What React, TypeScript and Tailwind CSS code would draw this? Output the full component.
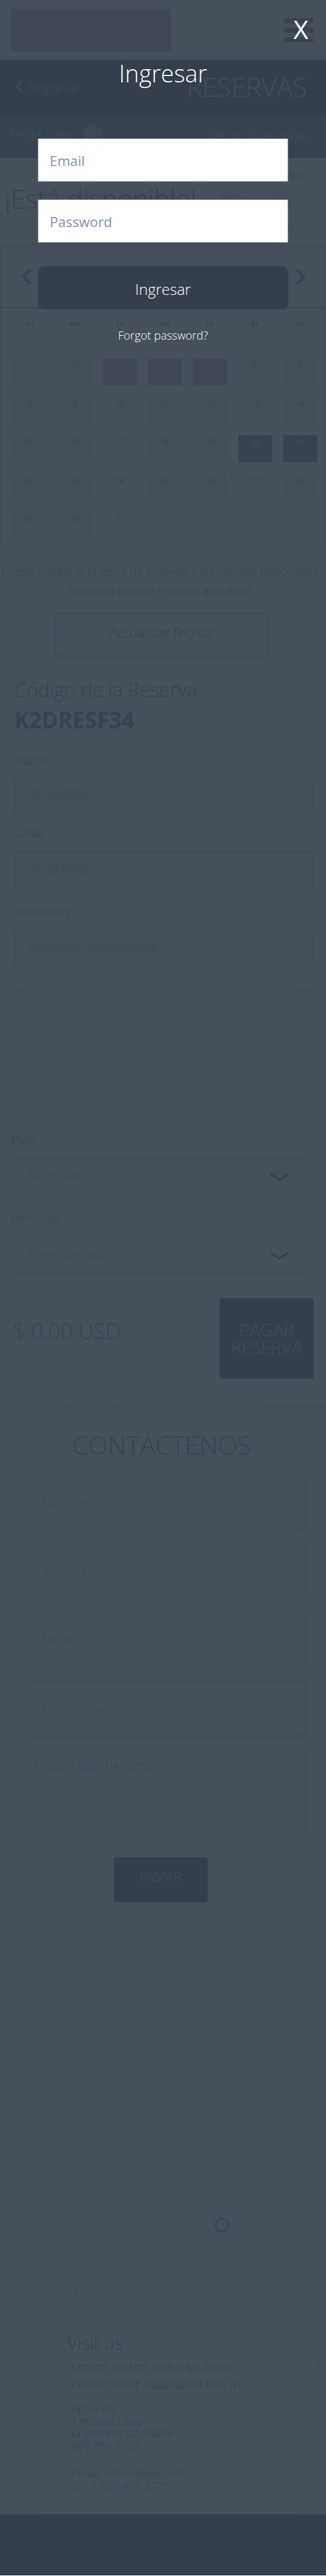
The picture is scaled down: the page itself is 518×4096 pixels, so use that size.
import type { ReactNode } from "react";

type DayState = "free" | "taken" | "selected";

const WEEKDAYS = ["Su", "Mo", "Tu", "We", "Th", "Fr", "Sa"];
const TAKEN = [3, 4, 5];
const SELECTED = [20, 21];

const DAY_STYLE: Record<DayState, string> = {
  free: "bg-[#444e58] text-[#37424e]",
  taken: "bg-[#3e4753] text-[#46505a]",
  selected: "bg-[#36424e] text-[#46505a]",
};

function dayState(day: number): DayState {
  if (TAKEN.includes(day)) return "taken";
  if (SELECTED.includes(day)) return "selected";
  return "free";
}

function Chevron({ points, className }: { points: string; className: string }) {
  return (
    <svg viewBox="0 0 30 30" fill="none" stroke="currentColor" strokeWidth="4" className={className} aria-hidden="true">
      <polyline points={points} />
    </svg>
  );
}

function Header() {
  return (
    <header className="flex h-[95px] items-center justify-between pl-[17px] pr-5">
      <div className="h-[68px] w-[53%] bg-[#3e4753]" />
      <button type="button" aria-label="Menú" className="flex w-[46px] flex-col gap-[7px]">
        <span className="h-2 bg-[#39434e]" />
        <span className="h-2 bg-[#39434e]" />
        <span className="h-2 bg-[#39434e]" />
      </button>
    </header>
  );
}

function TitleBars() {
  return (
    <>
      <div className="flex h-[89px] items-center justify-between bg-[#353f4b] pb-1 pl-[25px] pr-[30px] text-[#434d58]">
        <a href="#inicio" className="flex items-center gap-2 text-[21px] leading-7">
          <svg viewBox="0 0 11 20" fill="none" stroke="currentColor" strokeWidth="2.6" className="h-5 w-[11px]" aria-hidden="true">
            <polyline points="10,1 2,10 10,19" />
          </svg>
          Regresar
        </a>
        <h1 className="text-[42px] leading-[56px]">RESERVAS</h1>
      </div>
      <div className="flex h-[68px] items-center justify-between border border-[#3a4551] bg-[#36424e] pb-2 pl-4 pr-[28px] text-[#434d58]">
        <div className="flex items-center gap-3">
          <span className="text-2xl">Hola Juan</span>
          <span className="size-8 rounded-full bg-[#3e4753]" />
        </div>
        <a href="#reservas" className="text-[21px] leading-7">Ver mis reservas</a>
      </div>
    </>
  );
}

function Availability() {
  const legend = [
    { label: "No disponible", swatch: "bg-[#3e4753]" },
    { label: "Disponible", swatch: "bg-[#424c57]" },
    { label: "Reservada", swatch: "bg-[#36424e]" },
  ];
  return (
    <section className="flex items-center justify-between pb-2 pl-[7px] pr-[29px] pt-[5px]">
      <h2 className="pb-2 text-[42px] leading-[56px]">¡Está disponible!</h2>
      <ul className="w-[138px] text-[17px] leading-[42px]">
        {legend.map(({ label, swatch }) => (
          <li key={label} className="flex items-center gap-[10px] whitespace-nowrap">
            <span className={`size-5 shrink-0 ${swatch}`} />
            {label}
          </li>
        ))}
      </ul>
    </section>
  );
}

function Calendar() {
  return (
    <section className="rounded-[5px] border border-[#3b4651]">
      <div className="flex h-[98px] items-center justify-between border-b-2 border-[#3a4550] pl-[26px] pr-6">
        <button type="button" aria-label="Mes anterior">
          <Chevron points="21,4 10,15 21,26" className="h-[30px] w-[30px]" />
        </button>
        <button type="button" aria-label="Mes siguiente">
          <Chevron points="9,4 20,15 9,26" className="h-[30px] w-[30px]" />
        </button>
      </div>
      <div className="pb-[17px] pl-[19px] pr-[13px] pt-[17px]">
        <div className="grid grid-cols-7 gap-x-[18px] text-center text-[11px] font-semibold leading-4">
          {WEEKDAYS.map((name) => (
            <span key={name}>{name}</span>
          ))}
        </div>
        <div className="mt-[47px] grid grid-cols-7 gap-[18px]">
          {Array.from({ length: 31 }, (_, i) => i + 1).map((day) => (
            <button
              key={day}
              type="button"
              className={`flex h-[43px] justify-center pt-[3px] text-[11px] leading-4 ${DAY_STYLE[dayState(day)]} ${day === 23 ? "font-semibold" : "font-normal"}`}
            >
              {day}
            </button>
          ))}
        </div>
      </div>
    </section>
  );
}

function ReadOnlyField({ id, label, value }: { id: string; label: string; value: string }) {
  return (
    <div className="flex flex-col gap-[18px]">
      <label htmlFor={id} className="leading-6">{label}</label>
      <input
        id={id}
        readOnly
        defaultValue={value}
        className="h-[58px] w-full rounded-[5px] border border-[#3c4752] bg-[#444e58] pb-1 pl-[23px] text-[#3b4753] outline-none"
      />
    </div>
  );
}

function SelectField({ id, label, prompt }: { id: string; label: string; prompt: string }) {
  return (
    <div className="flex flex-col gap-[18px]">
      <label htmlFor={id} className="leading-6">{label}</label>
      <div className="relative">
        <select
          id={id}
          className="h-[58px] w-full appearance-none rounded-[5px] border border-[#3e4954] bg-transparent pb-1 pl-[27px] text-[#3b4753] outline-none"
        >
          <option>{prompt}</option>
        </select>
        <svg
          viewBox="0 0 30 12"
          fill="none"
          stroke="#36404c"
          strokeWidth="3.2"
          className="pointer-events-none absolute right-[38px] top-6 h-3 w-[30px]"
          aria-hidden="true"
        >
          <polyline points="1,1.2 15,10 29,1.2" />
        </svg>
      </div>
    </div>
  );
}

function Reservation() {
  return (
    <section>
      <p className="mt-[18px] pr-[6px] text-center text-lg leading-[31px]">
        <span className="block whitespace-nowrap">Puede modificar la fecha de acuerdo a los campos disponibles,</span>
        <span className="block">recuerda oprimir el botón actualizar:</span>
      </p>
      <div className="mt-5 flex justify-center pr-1">
        <button type="button" className="h-[69px] w-[66%] rounded-[5px] border-2 border-[#3f4955] pb-2 text-[22px]">
          Actualizar fechas
        </button>
      </div>
      <div className="mt-8 px-[23px]">
        <h2 className="text-[31px] leading-10">Código de la Reserva</h2>
        <p className="mt-[7px] text-[35px] font-bold leading-[44px]">K2DRESF34</p>
      </div>
      <form className="text-lg">
        <div className="mt-[27px] flex flex-col gap-[18px] pl-[23px] pr-[21px]">
          <ReadOnlyField id="ingreso" label="Ingreso:" value="03.10.2018" />
          <ReadOnlyField id="salida" label="Salida:" value="05.10.2018" />
          <div className="pt-[7px]">
            <ReadOnlyField id="habitacion" label="Habitación:" value="Habitación Suite Oriental" />
          </div>
        </div>
        <div className="mt-8 pl-[22px] pr-[21px]">
          <svg viewBox="0 0 475 213" preserveAspectRatio="none" className="h-[213px] w-full bg-[#444e58]" aria-hidden="true">
            <path d="M1 1L474 212M474 1L1 212" stroke="#404c58" strokeWidth="1.6" fill="none" />
          </svg>
        </div>
        <div className="mt-[18px] flex flex-col gap-[25px] pl-[18px] pr-[21px]">
          <SelectField id="plan" label="Plan:" prompt="Elegir plan" />
          <SelectField id="personas" label="Personas:" prompt="Elegir cantidad" />
        </div>
        <div className="mt-[39px] flex items-center justify-between pl-[21px] pr-5">
          <p className="pb-6 text-[34px] leading-[44px]">$ 0.00 USD</p>
          <button type="button" className="h-32 w-[149px] rounded-[3px] bg-[#353f4b] text-[28px] leading-7 text-[#434d58]">
            PAGAR RESERVA
          </button>
        </div>
      </form>
    </section>
  );
}

function Contact() {
  const fields = [
    { id: "nombre", label: "Nombre", type: "text" },
    { id: "apellido", label: "Apellido", type: "text" },
    { id: "movil", label: "Móvil", type: "tel" },
    { id: "correo", label: "Correo electrónico", type: "email" },
  ];
  return (
    <section>
      <svg viewBox="0 0 518 4" preserveAspectRatio="none" className="mt-[43px] block h-1 w-full" aria-hidden="true">
        <path d="M0 0.5L518 3.5" stroke="#3f4a55" strokeWidth="1" />
      </svg>
      <h2 className="mt-[30px] pr-1 text-center text-[41px] leading-[56px]">CONTÁCTENOS</h2>
      <form className="mt-4 text-xl">
        <div className="flex flex-col gap-5 pl-[41px] pr-[33px]">
          {fields.map(({ id, label, type }) => (
            <input
              key={id}
              type={type}
              aria-label={label}
              placeholder={label}
              className="h-[90px] w-full rounded-[5px] border border-[#3d4853] pl-[25px] pt-0.5 outline-none placeholder:text-[#3b4753]"
            />
          ))}
          <textarea
            aria-label="Escribe aquí tu mensaje"
            placeholder="Escribe aquí tu mensaje"
            className="mt-0.5 block h-[138px] w-full resize-none rounded-[5px] border border-[#3d4853] pl-3 pt-2 leading-7 outline-none placeholder:text-[#3b4753]"
          />
        </div>
        <div className="mt-8 flex justify-center pr-2">
          <button type="button" className="h-[72px] w-[149px] rounded-[3px] bg-[#353f4b] pb-2 text-[#434d58]">
            ENVIAR
          </button>
        </div>
      </form>
    </section>
  );
}

function StreetMap() {
  return (
    <svg viewBox="0 0 518 921" preserveAspectRatio="xMidYMid slice" className="absolute inset-0 size-full bg-[#454f59]" aria-hidden="true">
      <g transform="translate(0 28) scale(.33036 .33459)" fill="none" stroke="#46505a" strokeLinejoin="round">
        <path strokeWidth="36" d="M440-100L395 0L320 140L160 490L0 800L-60 920" />
        <path strokeWidth="30" strokeLinecap="round" d="M90 20L320 130" />
        <path strokeWidth="36" strokeLinecap="round" d="M740 185L480 660L300 1010L160 1270" />
        <path strokeWidth="30" d="M160 495L480 660L790 815" />
        <path strokeWidth="68" d="M1540-130L1430-20L1180 240Q1040 380 970 510L800 820L640 1170L430 1568L380 1690" />
        <path strokeWidth="34" d="M700-110L850 0L1170 235L1540 515" />
        <path strokeWidth="40" d="M1620 430L1540 515L1310 830L1130 1220L1040 1400L960 1568L900 1690" />
        <path strokeWidth="34" strokeLinecap="round" d="M1050 735L1290 850L1600 995" />
        <path strokeWidth="44" d="M1590 1030L1350 1540L1290 1690" />
        <path strokeWidth="34" d="M650 1170L870 1320L1040 1390L1350 1540L1600 1660" />
        <path strokeWidth="38" d="M870 1320L740 1568L670 1690" />
        <path strokeWidth="64" d="M-20 990L140 1270L300 1568L350 1690" />
        <path strokeWidth="70" d="M-20 1860L190 2030" />
        <path strokeWidth="54" d="M190 2020L-20 2470" />
        <path strokeWidth="44" d="M1600 1930L1400 2220" />
        <path strokeWidth="50" d="M1400 2350L1600 2520L1400 2670" />
        <g stroke="#414b56" strokeWidth="6">
          <path d="M305 998L334 948M316 955L335 946L336 966" />
          <path d="M1455 1595L1508 1626M1490 1628L1510 1628L1500 1610" />
          <path d="M1515 1989L1538 1936M1522 1948L1539 1934L1541 1954" />
        </g>
      </g>
      <circle cx="352.5" cy="461" r="10" fill="#465059" stroke="#33485b" strokeWidth="4" />
    </svg>
  );
}

function Visit() {
  return (
    <section className="relative mt-[52px] pl-[58px] pr-[49px] pt-[580px]">
      <StreetMap />
      <div className="relative bg-[#46505a] pb-[37px] pl-[49px] pt-[50px]">
        <h2 className="text-[28px] leading-9">Visit us</h2>
        <div className="pl-[6px] font-normal text-[#3b4652]">
          <p className="mt-[6px] h-[51px] overflow-hidden whitespace-nowrap text-xl leading-7">
            Lorem ipsum dolor sit amet,
            <br />
            consectetur adipiscing elit. In
          </p>
          <address className="mt-[21px] text-[17px] leading-[19px] not-italic">
            <p>Apple Inc.</p>
            <p>1 Infinite Loop</p>
            <p>Cupertino, CA 95014</p>
            <p>408-996-1010</p>
            <p className="mt-[26px]">Email: info@apple.com</p>
            <p>Tel: 1-800-676-2775</p>
          </address>
        </div>
      </div>
    </section>
  );
}

function Overlay({ children }: { children: ReactNode }) {
  return (
    <div role="dialog" aria-modal="true" aria-labelledby="login-title" className="absolute inset-0 flex flex-col pt-[22px] text-white">
      {children}
    </div>
  );
}

function Login() {
  const field =
    "h-[69px] w-full border border-[#8391ab] bg-white pl-[18px] text-[22px] font-normal text-[#8391ab] outline-none placeholder:text-[#8391ab]";
  return (
    <Overlay>
      <button type="button" aria-label="Cerrar" className="mr-7 self-end text-[41px] font-normal leading-[48px]">
        X
      </button>
      <h2 id="login-title" className="mt-[22px] text-center text-[38px] leading-[48px]">
        Ingresar
      </h2>
      <form className="mt-20 flex flex-col items-center px-[60px]">
        <input type="email" aria-label="Email" placeholder="Email" className={field} />
        <input type="password" aria-label="Password" placeholder="Password" className={`mt-7 ${field}`} />
        <button type="button" className="mt-[37px] h-[69px] w-full rounded-[11px] bg-[#353e4b] pt-1 text-2xl">
          Ingresar
        </button>
        <a href="#recuperar" className="mt-[29px] text-lg leading-6">
          Forgot password?
        </a>
      </form>
    </Overlay>
  );
}

export default function App() {
  return (
    <div className="relative bg-[#46505a] font-['Open_Sans','Noto_Sans',sans-serif] font-light text-[#37424e]">
      <Header />
      <TitleBars />
      <main>
        <Availability />
        <Calendar />
        <Reservation />
        <Contact />
        <Visit />
      </main>
      <footer className="h-[97px] bg-[#353e4b]" />
      <Login />
    </div>
  );
}
